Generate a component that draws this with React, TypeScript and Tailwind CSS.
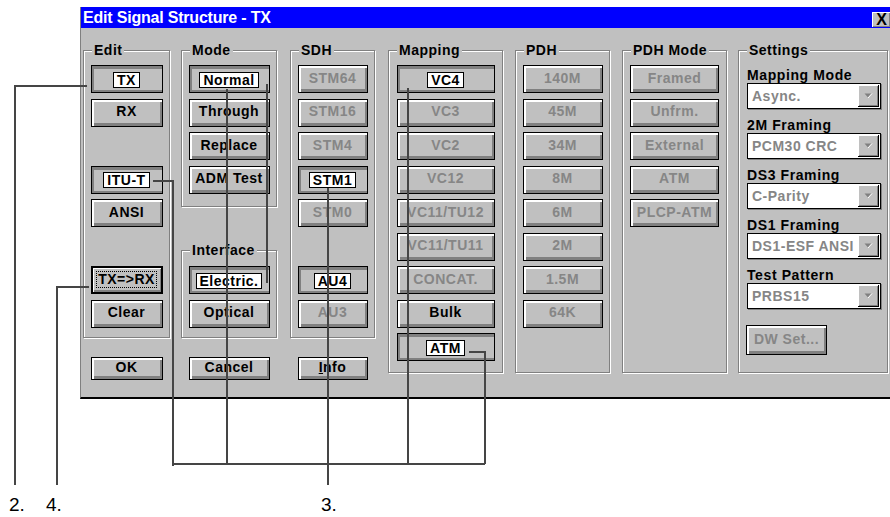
import React from "react";

type State = "on" | "off" | "dis" | "focus";
type Item = { label: React.ReactNode; state?: State } | null;

const raised = "border border-black bg-[#c0c0c0] shadow-[inset_2px_2px_0_#fff,inset_-2px_-3px_0_#808080]";

const Button = ({ label, state = "off", w, h = "h-[28px]" }: { label: React.ReactNode; state?: State; w: string; h?: string }) => {
	if (state === "on") {
		return (
			<div className={`${w} ${h} flex items-center justify-center border border-black bg-[#c0c0c0] shadow-[inset_2px_3px_0_#808080,inset_0_-2px_0_#808080] pt-[1px]`}>
				<span className="bg-white border border-black px-[3px] leading-[14px] text-black">{label}</span>
			</div>
		);
	}
	if (state === "focus") {
		return (
			<div className={`${w} ${h} flex items-center justify-center border-2 border-black bg-[#c0c0c0] shadow-[inset_1px_1px_0_#fff,inset_-1px_-2px_0_#808080] pb-[1px]`}>
				<span className="border border-dotted border-black px-[1px] leading-[15px] text-black">{label}</span>
			</div>
		);
	}
	return (
		<div className={`${w} ${h} flex items-center justify-center ${raised} pb-[2px] whitespace-nowrap overflow-hidden ${state === "dis" ? "text-[#868686]" : "text-black"}`}>
			{label}
		</div>
	);
};

const Group = ({ title, className, children }: { title: string; className: string; children?: React.ReactNode }) => (
	<fieldset className={`border border-[#808080] shadow-[inset_1px_1px_0_#fff,1px_1px_0_#fff] ${className}`}>
		<legend className="ml-[8px] px-[2px] bg-[#c0c0c0] leading-[16px]">{title}</legend>
		{children}
	</fieldset>
);

const Stack = ({ items, w }: { items: Item[]; w: string }) => (
	<div className="flex flex-col items-center gap-[5.5px] pt-[7px]">
		{items.map((it, idx) =>
			it ? <Button key={idx} label={it.label} state={it.state} w={w} /> : <div key={idx} className="h-[28px]" />
		)}
	</div>
);

const Combo = ({ value }: { value: string }) => (
	<div className="w-[134px] h-[26px] flex border border-black bg-white shadow-[1px_1px_0_#808080]">
		<div className="flex-1 overflow-hidden whitespace-nowrap pl-[4px] leading-[24px] text-[#868686]">{value}</div>
		<div className="w-[21px] my-[1px] mr-[1px] bg-[#c0c0c0] border-r border-b border-black shadow-[inset_1px_1px_0_#fff,inset_-1px_-1px_0_#808080] flex items-center justify-center">
			<svg width="9" height="6" viewBox="0 0 9 6">
				<path d="M0.5 0.5h7l-3.5 4z" fill="#808080" />
				<path d="M4 5l4-4.5" stroke="#fff" strokeWidth="1" />
			</svg>
		</div>
	</div>
);

const settings = [
	{ name: "Mapping Mode", value: "Async." },
	{ name: "2M Framing", value: "PCM30 CRC" },
	{ name: "DS3 Framing", value: "C-Parity" },
	{ name: "DS1 Framing", value: "DS1-ESF ANSI" },
	{ name: "Test Pattern", value: "PRBS15" },
];

const App = () => {
	return (
		<div className="relative w-[890px] h-[517px] overflow-hidden bg-white font-['Liberation_Sans',Arial,sans-serif] text-[14px] font-bold tracking-[0.5px] text-black">
			<div className="ml-[80px] mt-[7px] w-[812px] border-l border-[#808080] border-b-2 border-b-black bg-[#c0c0c0]">
				<div className="h-[21px] bg-[#0000ff] flex">
					<span className="pl-[2px] text-white text-[16px] tracking-[-0.2px] leading-[21px]">Edit Signal Structure - TX</span>
					<div className="ml-auto mr-[2px] self-end mb-[1px] w-[18px] h-[15px] bg-[#c0c0c0] border-l border-t border-white shadow-[inset_-1px_-1px_0_#808080] flex items-center justify-center text-[16px] leading-none tracking-normal">
						X
					</div>
				</div>

				<div className="h-[369px] flex items-start pl-[2px] pt-[14px]">
					{/* Edit + OK */}
					<div className="w-[87px] flex flex-col items-center">
						<Group title="Edit" className="w-full h-[296px]">
							<Stack
								w="w-[72px]"
								items={[
									{ label: "TX", state: "on" },
									{ label: "RX" },
									null,
									{ label: "ITU-T", state: "on" },
									{ label: "ANSI" },
									null,
									{ label: "TX=>RX", state: "focus" },
									{ label: "Clear" },
								]}
							/>
						</Group>
						<div className="mt-[19px]">
							<Button label="OK" w="w-[72px]" h="h-[23px]" />
						</div>
					</div>

					{/* Mode + Interface + Cancel */}
					<div className="ml-[11px] w-[96px] flex flex-col items-center">
						<Group title="Mode" className="w-full h-[165px]">
							<Stack
								w="w-[81px]"
								items={[
									{ label: "Normal", state: "on" },
									{ label: "Through" },
									{ label: "Replace" },
									{ label: "ADM Test" },
								]}
							/>
						</Group>
						<Group title="Interface" className="w-full h-[96px] mt-[35px]">
							<div className="flex flex-col items-center gap-[5.5px] pt-[8px]">
								<Button label="Electric." state="on" w="w-[81px]" />
								<Button label="Optical" w="w-[81px]" />
							</div>
						</Group>
						<div className="mt-[19px]">
							<Button label="Cancel" w="w-[81px]" h="h-[23px]" />
						</div>
					</div>

					{/* SDH + Info */}
					<div className="ml-[13px] w-[85px] flex flex-col items-center">
						<Group title="SDH" className="w-full h-[296px]">
							<Stack
								w="w-[70px]"
								items={[
									{ label: "STM64", state: "dis" },
									{ label: "STM16", state: "dis" },
									{ label: "STM4", state: "dis" },
									{ label: "STM1", state: "on" },
									{ label: "STM0", state: "dis" },
									null,
									{ label: "AU4", state: "on" },
									{ label: "AU3", state: "dis" },
								]}
							/>
						</Group>
						<div className="mt-[19px]">
							<Button
								label={
									<span>
										<span className="underline">I</span>nfo
									</span>
								}
								w="w-[70px]"
								h="h-[23px]"
							/>
						</div>
					</div>

					<Group title="Mapping" className="ml-[13px] w-[115px] h-[331px]">
						<Stack
							w="w-[98px]"
							items={[
								{ label: "VC4", state: "on" },
								{ label: "VC3", state: "dis" },
								{ label: "VC2", state: "dis" },
								{ label: "VC12", state: "dis" },
								{ label: "VC11/TU12", state: "dis" },
								{ label: "VC11/TU11", state: "dis" },
								{ label: "CONCAT.", state: "dis" },
								{ label: "Bulk" },
								{ label: "ATM", state: "on" },
							]}
						/>
					</Group>

					<Group title="PDH" className="ml-[12px] w-[95px] h-[331px]">
						<Stack
							w="w-[80px]"
							items={["140M", "45M", "34M", "8M", "6M", "2M", "1.5M", "64K"].map((l) => ({ label: l, state: "dis" as State }))}
						/>
					</Group>

					<Group title="PDH Mode" className="ml-[12px] w-[105px] h-[331px]">
						<Stack
							w="w-[89px]"
							items={["Framed", "Unfrm.", "External", "ATM", "PLCP-ATM"].map((l) => ({ label: l, state: "dis" as State }))}
						/>
					</Group>

					<Group title="Settings" className="ml-[11px] w-[150px] h-[331px]">
						<div className="flex flex-col pl-[8px] pt-[9px]">
							{settings.map((s) => (
								<div key={s.name} className="mb-[8px]">
									<div className="leading-[16px] tracking-[0.6px]">{s.name}</div>
									<Combo value={s.value} />
								</div>
							))}
							<div className="mt-[8px] -ml-[1px]">
								<Button label="DW Set..." state="dis" w="w-[81px]" h="h-[30px]" />
							</div>
						</div>
					</Group>
				</div>
			</div>

			{/* callout lines */}
			<svg className="absolute left-0 top-0 pointer-events-none" width="890" height="517" viewBox="0 0 890 517">
				<g fill="none" stroke="#454545" strokeWidth="2">
					<polyline points="15,485 15,86 87,86" />
					<polyline points="57,485 57,287 89,287" />
					<polyline points="153,181 173,181 173,466" />
					<polyline points="172,464 485,464" />
					<polyline points="227,89 227,464" />
					<polyline points="267,84 267,283" />
					<polyline points="328,188 328,485" />
					<polyline points="408,88 408,464" />
					<polyline points="469,352 485,352 485,464" />
				</g>
			</svg>
			<span className="absolute left-[9px] top-[495px] text-[19px] leading-[20px] font-normal tracking-normal">2.</span>
			<span className="absolute left-[46px] top-[495px] text-[19px] leading-[20px] font-normal tracking-normal">4.</span>
			<span className="absolute left-[321px] top-[495px] text-[19px] leading-[20px] font-normal tracking-normal">3.</span>
		</div>
	);
};

export default App;
